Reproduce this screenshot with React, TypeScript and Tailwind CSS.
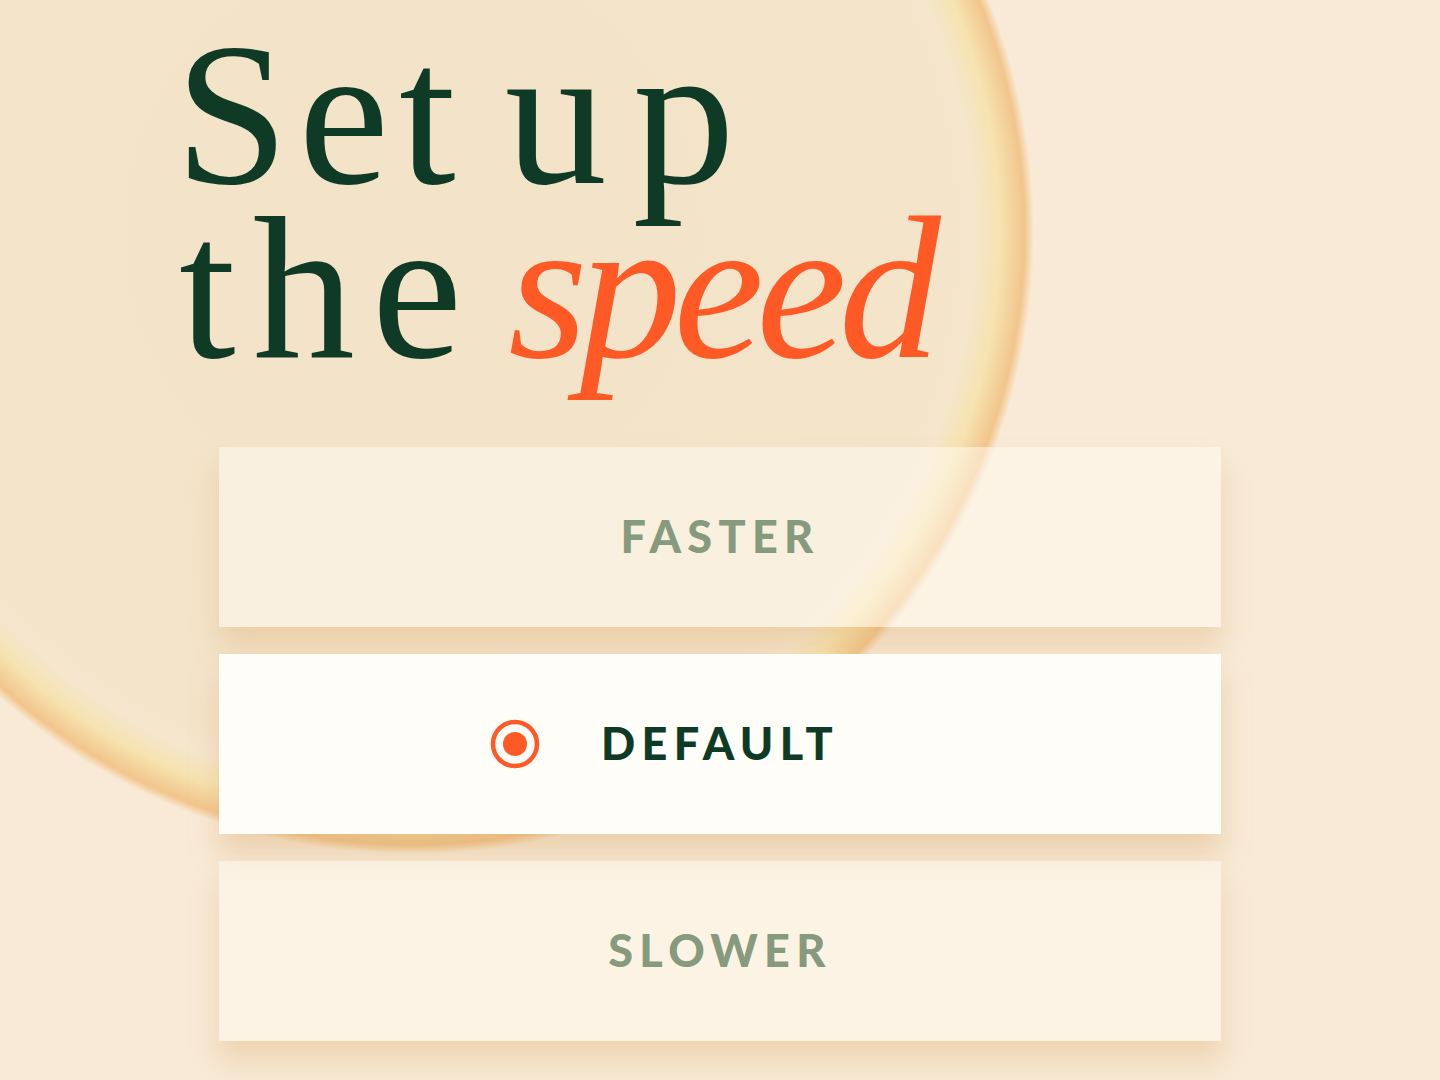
import React from 'react';

const options = [
  { id: 'faster', label: 'FASTER' },
  { id: 'default', label: 'DEFAULT' },
  { id: 'slower', label: 'SLOWER' },
];

function Radio() {
  return (
    <svg width="52" height="52" viewBox="0 0 52 52" className="absolute left-[-112px] top-1/2 -translate-y-1/2">
      <circle cx="26" cy="26" r="22" fill="none" stroke="#ff5a26" strokeWidth="4.5" />
      <circle cx="26" cy="26" r="12" fill="#ff5a26" />
    </svg>
  );
}

export default function App() {
  const selected = 'default';

  return (
    <div className="relative h-[1080px] w-[1440px] overflow-hidden bg-[#f8ead6]">
      {/* big decorative disc behind everything */}
      <div
        className="pointer-events-none absolute left-[-210px] top-[-390px] h-[1244px] w-[1244px] rounded-full"
        style={{
          background:
            'radial-gradient(circle closest-side, #f3e3c8 0%, #f3e4ca 86%, #f5e6cd 90.5%, #f6e3b0 94.5%, #f2c58c 98.5%, rgba(242,197,140,0) 100%)',
        }}
      />

      <div className="relative">
        <h1
          className="ml-[175px] mt-[27px] text-[204px] leading-[174px] tracking-[10px] text-[#0f3b26] [word-spacing:-22px]"
          style={{ fontFamily: '"Liberation Serif", "DejaVu Serif", serif' }}
        >
          Set <span className="tracking-[26px]">up</span>
          <br />
          <span className="ml-[4px] tracking-[17px]">the</span>{' '}
          <em className="-ml-[10px] italic tracking-[-8px] text-[#ff5a26]">speed</em>
        </h1>

        <div className="ml-[219px] mt-[72px] flex w-[1002px] flex-col gap-[27px]">
          {options.map(o => {
            const active = o.id === selected;
            return (
              <div
                key={o.id}
                className={
                  active
                    ? 'flex h-[180px] items-center justify-center bg-[#fffdf7] shadow-[0_20px_26px_rgba(214,162,96,0.34)]'
                    : 'flex h-[180px] items-center justify-center bg-[rgba(255,252,244,0.5)] shadow-[0_20px_26px_rgba(214,162,96,0.3)]'
                }
              >
                <div className="relative">
                  {active && <Radio />}
                  <span
                    className={
                      active
                        ? 'block text-[45px] font-black tracking-[0.14em] text-[#0f3b26]'
                        : 'block text-[45px] font-black tracking-[0.14em] text-[#869a7e]'
                    }
                    style={{ fontFamily: 'Lato, "Noto Sans", sans-serif' }}
                  >
                    {o.label}
                  </span>
                </div>
              </div>
            );
          })}
        </div>
      </div>
    </div>
  );
}
